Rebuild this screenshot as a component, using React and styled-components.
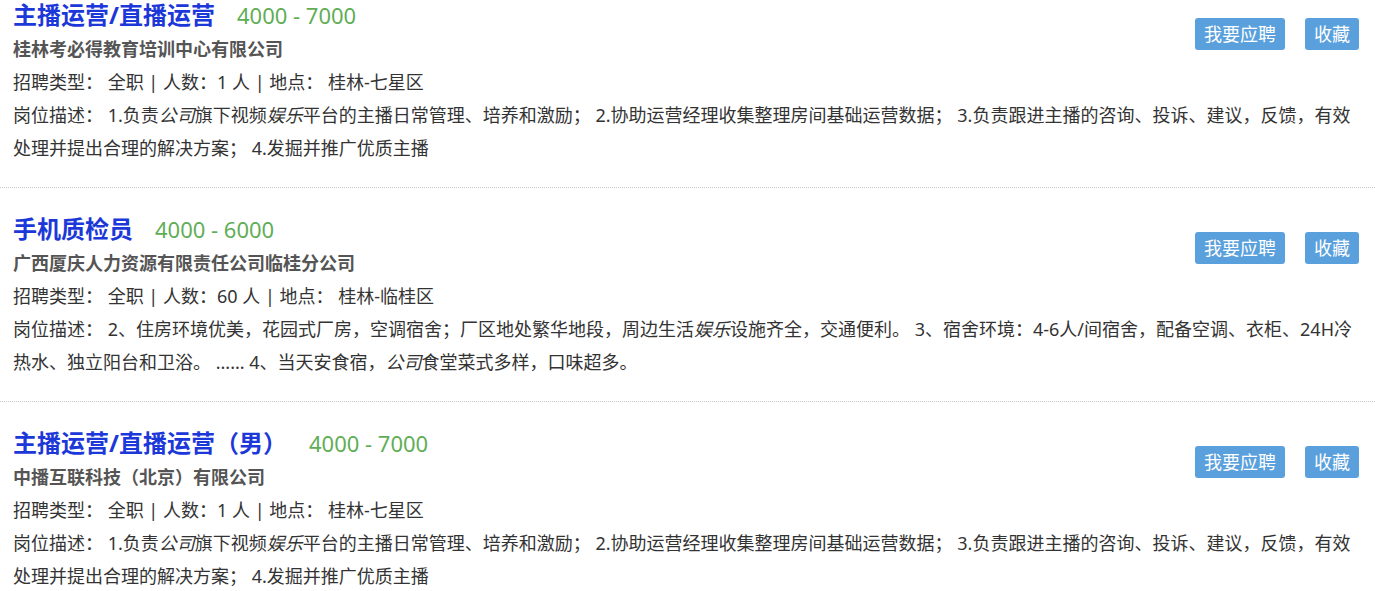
import styled, { createGlobalStyle } from "styled-components";

const GlobalStyle = createGlobalStyle`
  html, body {
    margin: 0;
    padding: 0;
    background: #fff;
  }
  body {
    font-family: "Noto Sans", "Noto Sans CJK SC", sans-serif;
    color: #333;
    overflow: hidden;
  }
`;

const List = styled.div`
  margin-top: -26px;
  width: 1375px;
`;

const Item = styled.div`
  padding: 23px 8px 23px 13px;
  border-bottom: 1px dotted #c8c8c8;
  height: 214px;
  box-sizing: border-box;
`;

const Head = styled.div`
  display: flex;
  justify-content: space-between;
  align-items: flex-start;
`;

const HeadText = styled.div`
  display: flex;
  flex-direction: column;
`;

const TitleRow = styled.div`
  display: flex;
  align-items: baseline;
  height: 36px;
  line-height: 36px;
`;

const Title = styled.a`
  font-size: 24px;
  font-weight: bold;
  color: #1c38d8;
  text-decoration: none;
`;

const Salary = styled.span`
  margin-left: 22px;
  font-size: 22px;
  color: #5fae56;
`;

const Company = styled.div`
  font-size: 18px;
  font-weight: bold;
  color: #555;
  line-height: 33px;
`;

const Actions = styled.div`
  display: flex;
  gap: 20px;
  margin: 21px 8px 0 0;
`;

const Button = styled.button`
  height: 32px;
  padding: 0 9px;
  border: none;
  border-radius: 3px;
  background: #5aa0dc;
  color: #fff;
  font-family: inherit;
  font-size: 18px;
  line-height: 32px;
  cursor: pointer;
`;

const Line = styled.div`
  font-size: 18px;
  line-height: 33px;
  color: #333;
`;

const Em = styled.em`
  font-style: italic;
`;

const jobs = [
  {
    title: "主播运营/直播运营",
    salary: "4000 - 7000",
    company: "桂林考必得教育培训中心有限公司",
    count: "1",
    place: "桂林-七星区",
    desc: (
      <>
        1.负责<Em>公司</Em>旗下视频<Em>娱乐</Em>平台的主播日常管理、培养和激励；
        2.协助运营经理收集整理房间基础运营数据； 3.负责跟进主播的咨询、投诉、建议，反馈，有效处理并提出合理的解决方案；
        4.发掘并推广优质主播
      </>
    ),
  },
  {
    title: "手机质检员",
    salary: "4000 - 6000",
    company: "广西厦庆人力资源有限责任公司临桂分公司",
    count: "60",
    place: "桂林-临桂区",
    desc: (
      <>
        2、住房环境优美，花园式厂房，空调宿舍；厂区地处繁华地段，周边生活<Em>娱乐</Em>设施齐全，交通便利。
        3、宿舍环境：4-6人/间宿舍，配备空调、衣柜、24H冷热水、独立阳台和卫浴。 ...... 4、当天安食宿，
        <Em>公司</Em>食堂菜式多样，口味超多。
      </>
    ),
  },
  {
    title: "主播运营/直播运营（男）",
    salary: "4000 - 7000",
    company: "中播互联科技（北京）有限公司",
    count: "1",
    place: "桂林-七星区",
    desc: (
      <>
        1.负责<Em>公司</Em>旗下视频<Em>娱乐</Em>平台的主播日常管理、培养和激励；
        2.协助运营经理收集整理房间基础运营数据； 3.负责跟进主播的咨询、投诉、建议，反馈，有效处理并提出合理的解决方案；
        4.发掘并推广优质主播
      </>
    ),
  },
];

const JobItem = ({ job }) => (
  <Item>
    <Head>
      <HeadText>
        <TitleRow>
          <Title href="#">{job.title}</Title>
          <Salary>{job.salary}</Salary>
        </TitleRow>
        <Company>{job.company}</Company>
      </HeadText>
      <Actions>
        <Button>我要应聘</Button>
        <Button>收藏</Button>
      </Actions>
    </Head>
    <Line>
      招聘类型： 全职 | 人数：{job.count} 人 | 地点： {job.place}
    </Line>
    <Line>岗位描述： {job.desc}</Line>
  </Item>
);

export default function App() {
  return (
    <>
      <GlobalStyle />
      <List>
        {jobs.map((job, i) => (
          <JobItem key={i} job={job} />
        ))}
      </List>
    </>
  );
}
